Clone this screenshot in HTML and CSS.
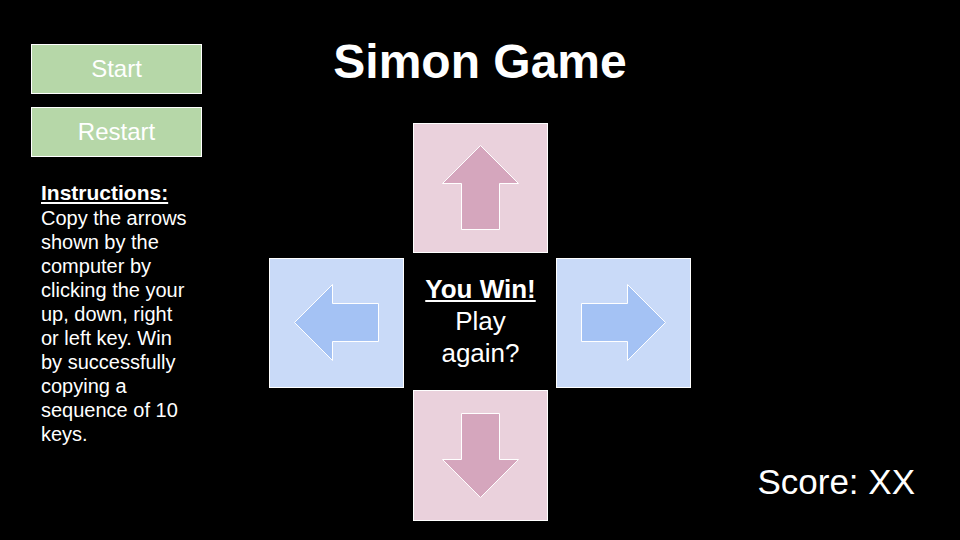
FILE: index.html
```html
<!DOCTYPE html>
<html lang="en">
<head>
  <meta charset="utf-8">
  <meta name="viewport" content="width=device-width, initial-scale=1">
  <title>Simon Game</title>
  <link rel="stylesheet" href="styles.css">
</head>
<body>
  <main class="game">
    <aside class="sidebar">
      <div class="controls">
        <button class="control" type="button">Start</button>
        <button class="control" type="button">Restart</button>
      </div>
      <section class="instructions">
        <h2 class="instructions-title">Instructions:</h2>
        <p class="instructions-text">Copy the arrows shown by the computer by clicking the your up, down, right or left key. Win by successfully copying a sequence of 10 keys.</p>
      </section>
    </aside>

    <div class="stage">
      <h1 class="title">Simon Game</h1>
      <div class="board">
        <button class="tile tile-pink tile-up" type="button" aria-label="Up">
          <svg class="arrow" width="77" height="86" viewBox="0 0 77 86" aria-hidden="true">
            <path d="M38.5 .5 L76.5 38.5 H57.5 V84.5 H19.5 V38.5 H.5 Z"/>
          </svg>
        </button>
        <button class="tile tile-blue tile-left" type="button" aria-label="Left">
          <svg class="arrow" width="85" height="78" viewBox="0 0 85 78" aria-hidden="true">
            <path d="M.5 38.5 L38.5 .5 V19.5 H84.5 V57.5 H38.5 V76.5 Z"/>
          </svg>
        </button>
        <div class="result" role="status">
          <h2 class="result-title">You Win!</h2>
          <p class="result-text">Play again?</p>
        </div>
        <button class="tile tile-blue tile-right" type="button" aria-label="Right">
          <svg class="arrow" width="85" height="78" viewBox="0 0 85 78" aria-hidden="true">
            <path d="M84.5 38.5 L46.5 .5 V19.5 H.5 V57.5 H46.5 V76.5 Z"/>
          </svg>
        </button>
        <button class="tile tile-pink tile-down" type="button" aria-label="Down">
          <svg class="arrow" width="77" height="85" viewBox="0 0 77 85" aria-hidden="true">
            <path d="M38.5 84.5 L76.5 46.5 H57.5 V.5 H19.5 V46.5 H.5 Z"/>
          </svg>
        </button>
      </div>
    </div>

    <p class="score">Score: XX</p>
  </main>
</body>
</html>
```
FILE: styles.css
```css
* {
  box-sizing: border-box;
}

body,
h1,
h2,
p {
  margin: 0;
}

body {
  background: #000;
  color: #fff;
  font-family: "Liberation Sans", Arial, sans-serif;
}

button {
  border: 1px solid #fff;
  border-radius: 0;
  padding: 0;
  color: inherit;
  font-family: inherit;
  cursor: pointer;
}

.game {
  display: grid;
  grid-template-columns: 1fr auto 1fr;
  min-height: 100vh;
}

/* Left column: controls and rules */
.sidebar {
  width: 202px;
  padding: 44px 0 24px 31px;
}

.controls {
  display: grid;
  gap: 13px;
}

.control {
  height: 50px;
  background: #b6d7a8;
  font-size: 24px;
}

.instructions {
  margin-top: 23px;
  padding: 0 10px;
}

.instructions-title {
  font-size: 21px;
  line-height: 26px;
  text-decoration: underline;
}

.instructions-text {
  font-size: 20px;
  line-height: 24px;
}

/* Centre column: title and arrow pad */
.stage {
  padding: 34px 0 19px;
}

.title {
  font-size: 48px;
  line-height: 56px;
  text-align: center;
}

.board {
  display: grid;
  grid-template-columns: repeat(3, auto);
  grid-template-areas:
    ". up ."
    "left result right"
    ". down .";
  margin-top: 33px;
}

.tile {
  display: flex;
  align-items: center;
  justify-content: center;
  width: 135px;
  height: 130px;
}

.tile-pink {
  background: #ead1dc;
  fill: #d5a6bd;
}

.tile-blue {
  background: #c9daf8;
  fill: #a4c2f4;
}

.tile-up {
  grid-area: up;
  margin-bottom: 5px;
}

.tile-left {
  grid-area: left;
  margin-right: 9px;
}

.tile-right {
  grid-area: right;
  margin-left: 8px;
}

.tile-down {
  grid-area: down;
  height: 131px;
  margin-top: 2px;
}

.arrow {
  display: block;
  stroke: #fff;
  stroke-width: 1;
}

.result {
  grid-area: result;
  align-self: center;
  width: 135px;
  padding: 0 10px 4px;
  font-size: 26px;
  line-height: 32px;
  text-align: center;
}

.result-title {
  font-size: inherit;
  text-decoration: underline;
}

/* Right column: score in the lower corner */
.score {
  align-self: end;
  padding: 0 45px 38px 0;
  font-size: 35px;
  line-height: 40px;
  text-align: right;
}
```
